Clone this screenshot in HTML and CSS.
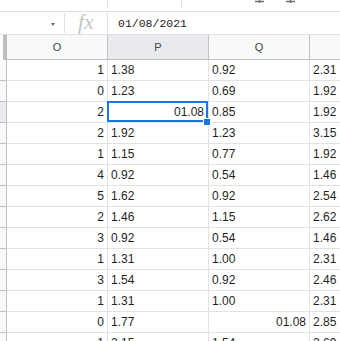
FILE: index.html
```html
<!DOCTYPE html>
<html>
<head>
<meta charset="utf-8">
<link rel="stylesheet" href="styles.css">
</head>
<body>
<div class="toolbar">
  <div class="tseg tseg-a"></div>
  <div class="tseg tseg-b"></div>
  <div class="ticons">
    <svg class="ticon" width="10" height="4" viewBox="0 0 10 4"><path d="M0 1.5H9M4.5 0V3" stroke="#6f6f6f" stroke-width="1.4" fill="none"/></svg>
    <svg class="ticon" width="10" height="4" viewBox="0 0 10 4"><path d="M0 1.5H9M4.5 0V3" stroke="#6f6f6f" stroke-width="1.4" fill="none"/></svg>
  </div>
</div>
<div class="formula">
  <div class="namebox"><span class="caret"></span></div>
  <div class="fxbox"><span class="fx">fx</span></div>
  <div class="ftext">01/08/2021</div>
</div>
<div class="sheet">
  <div class="corner"></div>
  <div class="ch">O</div><div class="ch sel">P</div><div class="ch">Q</div><div class="ch last"></div>

  <div class="rh"></div><div class="c r">1</div><div class="c">1.38</div><div class="c">0.92</div><div class="c">2.31</div>
  <div class="rh"></div><div class="c r">0</div><div class="c">1.23</div><div class="c">0.69</div><div class="c">1.92</div>
  <div class="rh sel"></div><div class="c r">2</div><div class="c r active">01.08<span class="handle"></span></div><div class="c">0.85</div><div class="c">1.92</div>
  <div class="rh"></div><div class="c r">2</div><div class="c">1.92</div><div class="c">1.23</div><div class="c">3.15</div>
  <div class="rh"></div><div class="c r">1</div><div class="c">1.15</div><div class="c">0.77</div><div class="c">1.92</div>
  <div class="rh"></div><div class="c r">4</div><div class="c">0.92</div><div class="c">0.54</div><div class="c">1.46</div>
  <div class="rh"></div><div class="c r">5</div><div class="c">1.62</div><div class="c">0.92</div><div class="c">2.54</div>
  <div class="rh"></div><div class="c r">2</div><div class="c">1.46</div><div class="c">1.15</div><div class="c">2.62</div>
  <div class="rh"></div><div class="c r">3</div><div class="c">0.92</div><div class="c">0.54</div><div class="c">1.46</div>
  <div class="rh"></div><div class="c r">1</div><div class="c">1.31</div><div class="c">1.00</div><div class="c">2.31</div>
  <div class="rh"></div><div class="c r">3</div><div class="c">1.54</div><div class="c">0.92</div><div class="c">2.46</div>
  <div class="rh"></div><div class="c r">1</div><div class="c">1.31</div><div class="c">1.00</div><div class="c">2.31</div>
  <div class="rh"></div><div class="c r">0</div><div class="c">1.77</div><div class="c r">01.08</div><div class="c">2.85</div>
  <div class="rh"></div><div class="c r">1</div><div class="c">2.15</div><div class="c">1.54</div><div class="c">2.69</div>
</div>
</body>
</html>
```
FILE: styles.css
```css
html, body {
  margin: 0;
  padding: 0;
  background: #fff;
  overflow: hidden;
  width: 340px;
  height: 341px;
}
body {
  font-family: "Liberation Sans", Arial, sans-serif;
}
.toolbar {
  height: 11px;
  border-bottom: 1px solid #e0e0e0;
  display: flex;
  align-items: flex-start;
}
.tseg {
  height: 7px;
  border-right: 1px solid #e0e0e0;
  box-sizing: border-box;
}
.tseg-a { width: 108px; }
.tseg-b { width: 74px; }
.ticons {
  display: flex;
  gap: 21px;
  margin-left: 73px;
}
.ticon { display: block; }

.formula {
  height: 22px;
  border-bottom: 1px solid #e0e0e0;
  display: flex;
  align-items: stretch;
}
.namebox {
  width: 64px;
  margin: 1px 0;
  border-right: 1px solid #e0e0e0;
  display: flex;
  align-items: center;
  justify-content: flex-end;
  padding-right: 9px;
  box-sizing: content-box;
  width: 55px;
}
.caret {
  width: 0;
  height: 0;
  border-left: 2.5px solid transparent;
  border-right: 2.5px solid transparent;
  border-top: 3px solid #666;
  margin-top: 2px;
}
.fxbox {
  width: 42px;
  margin: 1px 0;
  border-right: 1px solid #e0e0e0;
  display: flex;
  align-items: center;
  justify-content: center;
}
.fx {
  font-family: "Liberation Serif", "Times New Roman", serif;
  font-style: italic;
  font-size: 21px;
  color: #c4c4c4;
  line-height: 1;
  margin-top: -2px;
  letter-spacing: 0.5px;
}
.ftext {
  font-family: "Liberation Mono", "DejaVu Sans Mono", monospace;
  font-size: 11.5px;
  color: #222;
  padding-left: 10px;
  display: flex;
  align-items: center;
}

.sheet {
  display: grid;
  grid-template-columns: 7px 101px 101px 101px 40px;
  grid-template-rows: 25px;
  grid-auto-rows: 21px;
}
.sheet > div {
  box-sizing: border-box;
}
.corner {
  background: #f8f9fa;
  border-right: 4px solid #bdbdbd;
  border-bottom: 1px solid #c0c0c0;
  margin-left: 3px;
}
.ch {
  background: #f8f9fa;
  border-right: 1px solid #c0c0c0;
  border-bottom: 1px solid #c0c0c0;
  font-size: 11px;
  color: #444;
  display: flex;
  align-items: center;
  justify-content: center;
}
.ch.sel { background: #e8eaed; }
.ch.last { border-right: none; }
.rh {
  background: #f8f9fa;
  border-right: 1px solid #c0c0c0;
  border-bottom: 1px solid #c0c0c0;
}
.rh.sel { background: #e8eaed; }
.c {
  border-right: 1px solid #e2e2e2;
  border-bottom: 1px solid #e2e2e2;
  font-size: 12px;
  line-height: 20px;
  color: #1f1f1f;
  padding: 0 3px;
  white-space: nowrap;
  overflow: visible;
}
.c.r { text-align: right; }
.active {
  position: relative;
  padding-right: 4px;
}
.active::after {
  content: "";
  position: absolute;
  left: -1px;
  top: -1px;
  right: 0;
  bottom: 0;
  border: 2px solid #1a73e8;
  pointer-events: none;
}
.handle {
  position: absolute;
  left: 95px;
  top: 16px;
  width: 6px;
  height: 6px;
  background: #1a73e8;
  border: 1px solid #fff;
  z-index: 2;
}
```
